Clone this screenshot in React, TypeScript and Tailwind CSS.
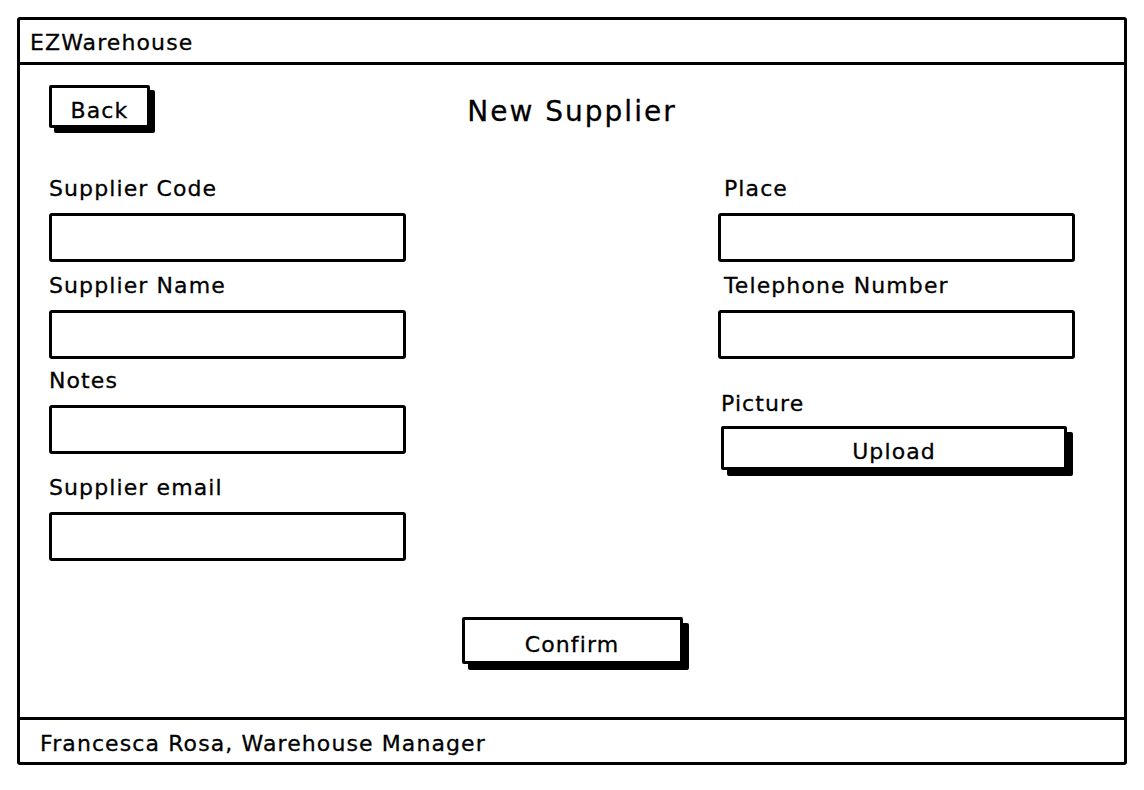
import React from "react";

const font = { fontFamily: '"DejaVu Sans", "Noto Sans", sans-serif' };

function Field({ label, className = "", labelClass = "" }: { label: string; className?: string; labelClass?: string }) {
  return (
    <div className={className}>
      <div className={`text-[22px] leading-[24px] tracking-[1.1px] ${labelClass}`}>{label}</div>
      <div className="mt-3 h-[49px] w-[357px] border-[3px] border-black rounded-[3px] bg-white" />
    </div>
  );
}

export default function App() {
  return (
    <div
      className="w-[1144px] h-[790px] bg-white text-black pt-[17px] pl-[17px] [-webkit-text-stroke:0.3px_#000]"
      style={font}
    >
      <div className="w-[1110px] h-[748px] border-[3px] border-black rounded-[3px] flex flex-col">
        {/* Header */}
        <div className="h-[45px] border-b-[3px] border-black px-[10px] pt-[3px] flex items-center text-[22px] tracking-[1.1px]">
          EZWarehouse
        </div>

        {/* Main */}
        <div className="flex-1 flex flex-col px-[29px] pt-[20px]">
          <div className="grid grid-cols-[1fr_auto_1fr] items-start">
            <div>
              <button className="w-[101px] h-[43px] pt-[6px] border-[3px] border-black rounded-[2px] bg-white shadow-[5px_5px_0_#000] text-[22px] tracking-[1.1px]">
                Back
              </button>
            </div>
            <h1 className="text-[28px] leading-[36px] pt-[9px] tracking-[2px]">New Supplier</h1>
            <div />
          </div>

          <div className="flex justify-between mt-[47px]">
            <div className="flex flex-col">
              <Field label="Supplier Code" />
              <Field label="Supplier Name" className="mt-[12px]" />
              <Field label="Notes" className="mt-[10px]" />
              <Field label="Supplier email" className="mt-[22px]" />
            </div>
            <div className="flex flex-col mr-[20px]">
              <Field label="Place" labelClass="pl-[6px]" />
              <Field label="Telephone Number" className="mt-[12px]" labelClass="pl-[6px]" />
              <div className="mt-[33px] pl-[3px]">
                <div className="text-[22px] leading-[24px] tracking-[1.1px]">Picture</div>
                <button className="mt-[10px] w-[346px] h-[44px] pt-[6px] border-[3px] border-black rounded-[2px] bg-white shadow-[6px_6px_0_#000] text-[22px] tracking-[1.1px]">
                  Upload
                </button>
              </div>
            </div>
          </div>

          <div className="flex justify-center mt-[56px]">
            <button className="w-[221px] h-[47px] pt-[7px] border-[3px] border-black rounded-[2px] bg-white shadow-[6px_6px_0_#000] text-[22px] tracking-[1.1px]">
              Confirm
            </button>
          </div>
        </div>

        {/* Footer */}
        <div className="h-[45px] border-t-[3px] border-black px-[20px] pt-[5px] flex items-center text-[22px] tracking-[1.1px]">
          Francesca Rosa, Warehouse Manager
        </div>
      </div>
    </div>
  );
}
